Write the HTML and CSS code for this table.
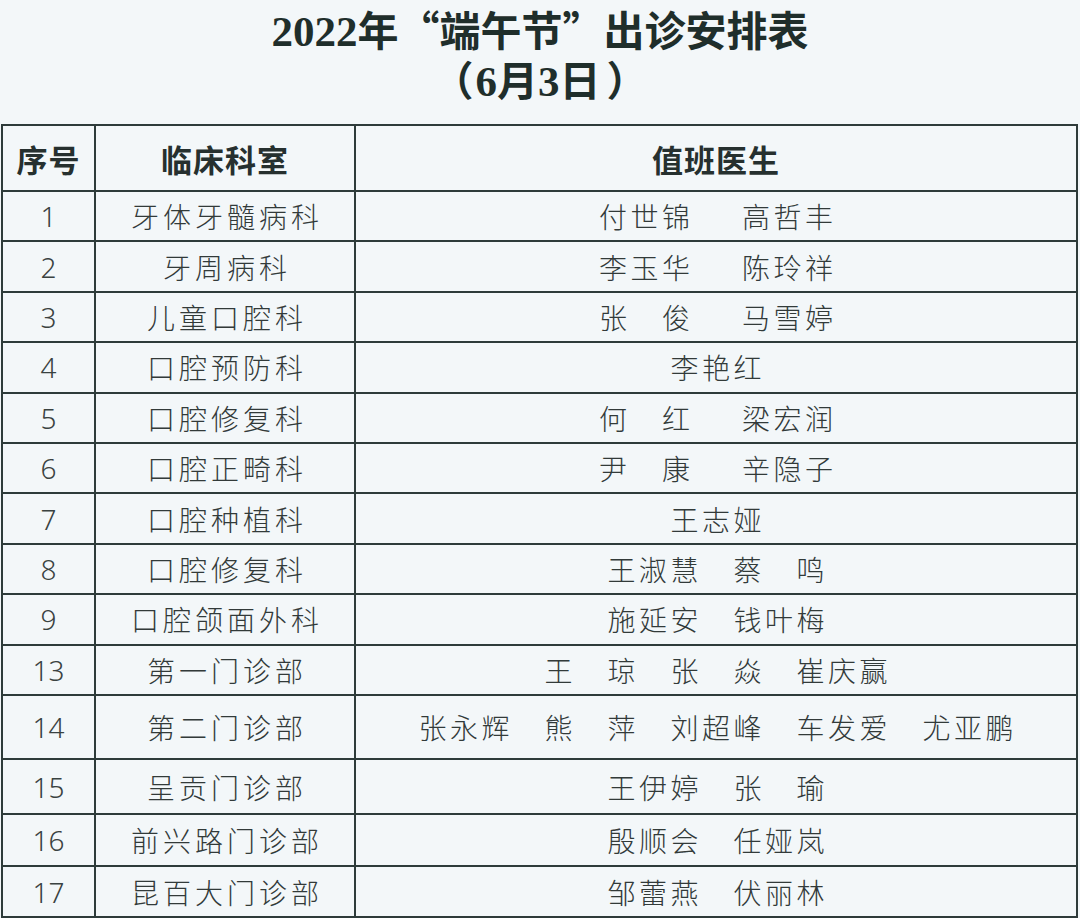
FILE: index.html
```html
<!DOCTYPE html>
<html lang="zh-CN">
<head>
<meta charset="utf-8">
<title>2022年“端午节”出诊安排表</title>
<link rel="stylesheet" href="styles.css">
</head>
<body>
<div class="page">
  <h1 class="title">
    <span class="line"><span class="num">2022</span>年<span class="ql">“</span>端午节<span class="qr">”</span>出诊安排表</span>
    <span class="line"><span class="pl">（</span><span class="num">6</span>月<span class="num">3</span>日<span class="pr">）</span></span>
  </h1>
  <table class="schedule">
    <colgroup>
      <col class="c-no">
      <col class="c-dept">
      <col class="c-doc">
    </colgroup>
    <thead>
      <tr class="head">
        <th class="h-no">序号</th>
        <th class="h-dept">临床科室</th>
        <th class="h-doc">值班医生</th>
      </tr>
    </thead>
    <tbody>
      <tr class="r"><td class="no">1</td><td class="dept">牙体牙髓病科</td><td><div class="docs wide"><span>付世锦</span><span>高哲丰</span></div></td></tr>
      <tr class="r"><td class="no">2</td><td class="dept">牙周病科</td><td><div class="docs wide"><span>李玉华</span><span>陈玲祥</span></div></td></tr>
      <tr class="r"><td class="no">3</td><td class="dept">儿童口腔科</td><td><div class="docs wide"><span>张　俊</span><span>马雪婷</span></div></td></tr>
      <tr class="r"><td class="no">4</td><td class="dept">口腔预防科</td><td><div class="docs"><span>李艳红</span></div></td></tr>
      <tr class="r"><td class="no">5</td><td class="dept">口腔修复科</td><td><div class="docs wide"><span>何　红</span><span>梁宏润</span></div></td></tr>
      <tr class="r"><td class="no">6</td><td class="dept">口腔正畸科</td><td><div class="docs wide"><span>尹　康</span><span>辛隐子</span></div></td></tr>
      <tr class="r"><td class="no">7</td><td class="dept">口腔种植科</td><td><div class="docs"><span>王志娅</span></div></td></tr>
      <tr class="r"><td class="no">8</td><td class="dept">口腔修复科</td><td><div class="docs"><span>王淑慧</span><span>蔡　鸣</span></div></td></tr>
      <tr class="r"><td class="no">9</td><td class="dept">口腔颌面外科</td><td><div class="docs"><span>施延安</span><span>钱叶梅</span></div></td></tr>
      <tr class="r"><td class="no">13</td><td class="dept">第一门诊部</td><td><div class="docs"><span>王　琼</span><span>张　焱</span><span>崔庆赢</span></div></td></tr>
      <tr class="r tall"><td class="no">14</td><td class="dept">第二门诊部</td><td><div class="docs"><span>张永辉</span><span>熊　萍</span><span>刘超峰</span><span>车发爱</span><span>尤亚鹏</span></div></td></tr>
      <tr class="r mid"><td class="no">15</td><td class="dept">呈贡门诊部</td><td><div class="docs"><span>王伊婷</span><span>张　瑜</span></div></td></tr>
      <tr class="r last"><td class="no">16</td><td class="dept">前兴路门诊部</td><td><div class="docs"><span>殷顺会</span><span>任娅岚</span></div></td></tr>
      <tr class="r last"><td class="no">17</td><td class="dept">昆百大门诊部</td><td><div class="docs"><span>邹蕾燕</span><span>伏丽林</span></div></td></tr>
    </tbody>
  </table>
</div>
</body>
</html>
```

FILE: styles.css
```css
html, body {
  margin: 0;
  padding: 0;
  background: #f3f7f9;
}

.page {
  width: 1080px;
  background: #f3f7f9;
  font-family: "Noto Sans CJK SC", "Noto Sans", sans-serif;
  color: #333b3a;
}

.title {
  margin: 0;
  padding-top: 3px;
  display: flex;
  flex-direction: column;
  align-items: center;
  font-size: 41px;
  font-weight: 700;
  color: #1f2e2b;
  line-height: 50px;
}

.title .line {
  display: block;
  height: 50px;
  white-space: nowrap;
}

.title .num {
  font-family: "Liberation Serif", serif;
  font-weight: 700;
  font-size: 43px;
  line-height: 1;
}

.title .ql,
.title .qr,
.title .pl,
.title .pr {
  display: inline-block;
  width: 1em;
  line-height: 1;
}

.title .ql { text-align: right; }
.title .qr { text-align: left; }
.title .pl { text-align: left; width: 1.05em; }
.title .pr { text-align: right; width: 1.15em; }

.schedule {
  margin-top: 21px;
  margin-left: 1px;
  width: 1077px;
  border-collapse: collapse;
  table-layout: fixed;
}

.c-no { width: 93px; }
.c-dept { width: 260px; }
.c-doc { width: auto; }

.schedule th,
.schedule td {
  border: 2.5px solid #2e3b3a;
  padding: 0;
  text-align: center;
  vertical-align: middle;
}

.head { height: 66px; }

.schedule th {
  font-size: 31px;
  font-weight: 700;
  color: #26302f;
  letter-spacing: 1px;
}

.r { height: 50.4px; }
.r.tall { height: 64px; }
.r.mid { height: 55.5px; }
.r.last { height: 51.5px; }

.no {
  font-family: "Noto Sans", "Noto Sans CJK SC", sans-serif;
  font-weight: 300;
  font-size: 28px;
  color: #3a4241;
}

.dept {
  font-size: 28px;
  font-weight: 300;
  letter-spacing: 4px;
  padding-left: 4px !important;
  color: #323a39;
}

.docs {
  display: flex;
  justify-content: center;
  gap: 31.5px;
  font-size: 28px;
  font-weight: 300;
  letter-spacing: 3.5px;
  padding-left: 3.5px;
  color: #323a39;
  white-space: nowrap;
}

.docs.wide { gap: 48.5px; }
```
